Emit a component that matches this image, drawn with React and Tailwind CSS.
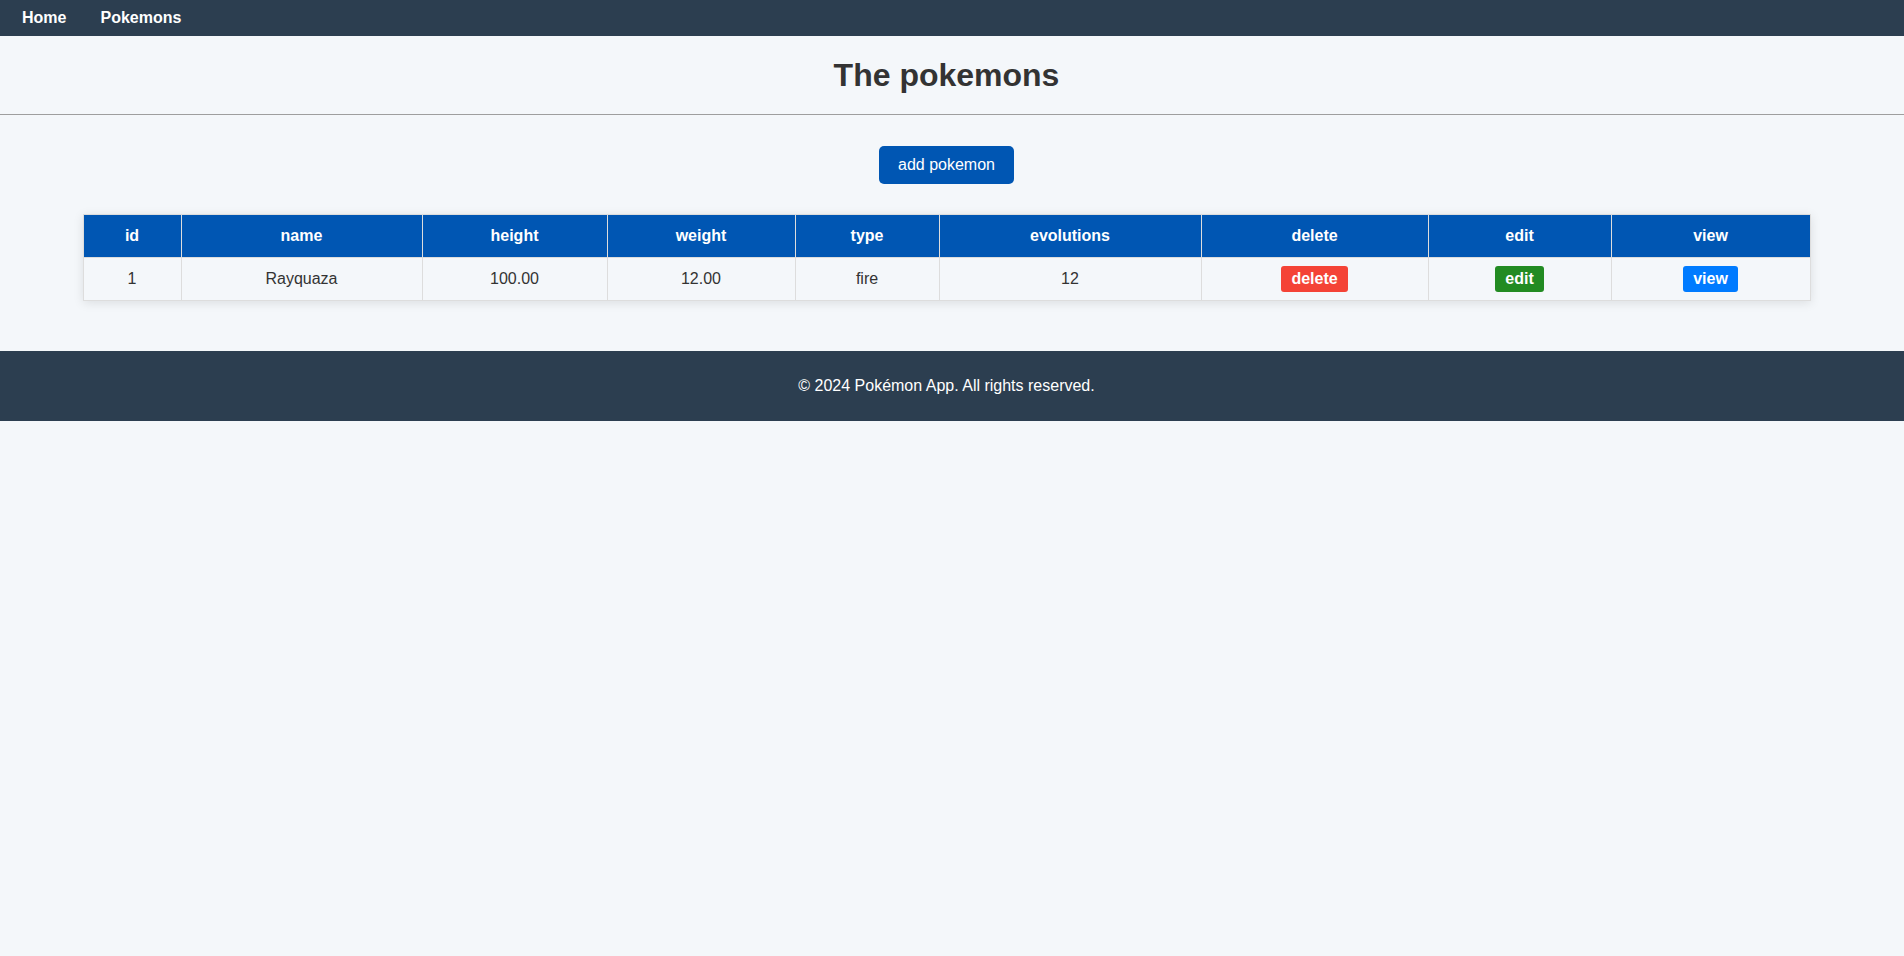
import React from 'react';

const columns = [
  { key: 'id', label: 'id', width: 'w-[98px]' },
  { key: 'name', label: 'name', width: 'w-[241px]' },
  { key: 'height', label: 'height', width: 'w-[185px]' },
  { key: 'weight', label: 'weight', width: 'w-[188px]' },
  { key: 'type', label: 'type', width: 'w-[144px]' },
  { key: 'evolutions', label: 'evolutions', width: 'w-[262px]' },
  { key: 'delete', label: 'delete', width: 'w-[227px]' },
  { key: 'edit', label: 'edit', width: 'w-[183px]' },
  { key: 'view', label: 'view', width: 'w-[199px]' },
];

const pokemons = [
  { id: 1, name: 'Rayquaza', height: '100.00', weight: '12.00', type: 'fire', evolutions: 12 },
];

function ActionButton({ color, children }) {
  return (
    <button className={`${color} text-white font-bold text-base leading-[18px] px-[10px] py-1 rounded-[3px]`}>
      {children}
    </button>
  );
}

function App() {
  return (
    <div className="min-h-screen bg-[#f4f7fa] text-[#333] font-['Liberation_Sans',Arial,sans-serif]">
      {/* Top navigation */}
      <nav className="h-9 bg-[#2c3e50] flex items-center pl-[22px] gap-[34px]">
        <a href="#" className="text-white font-bold text-base">Home</a>
        <a href="#" className="text-white font-bold text-base">Pokemons</a>
      </nav>

      <header className="pt-[21px] pb-[20px] pr-[11px] border-b border-[#9e9e9e] text-center">
        <h1 className="text-[32px] leading-[37px] font-bold text-[#333]">The pokemons</h1>
      </header>

      <main className="pr-[11px] pt-[31px] pb-[50px] flex flex-col items-center">
        <button className="bg-[#0056b3] text-white text-base leading-[18px] px-[19.5px] py-[10px] rounded-[5px]">
          add pokemon
        </button>

        <table className="mt-[30px] w-[1727px] table-fixed border-collapse border border-[#ddd] shadow-[0_2px_10px_rgba(0,0,0,0.1)]">
          <colgroup>
            {columns.map((c) => (
              <col key={c.key} className={c.width} />
            ))}
          </colgroup>
          <thead>
            <tr className="bg-[#0056b3]">
              {columns.map((c) => (
                <th key={c.key} className="border border-[#ddd] py-3 text-white font-bold text-base leading-[18px] text-center">
                  {c.label}
                </th>
              ))}
            </tr>
          </thead>
          <tbody>
            {pokemons.map((p) => (
              <tr key={p.id}>
                <td className="border border-[#ddd] py-2 text-center text-base">{p.id}</td>
                <td className="border border-[#ddd] py-2 text-center text-base">{p.name}</td>
                <td className="border border-[#ddd] py-2 text-center text-base">{p.height}</td>
                <td className="border border-[#ddd] py-2 text-center text-base">{p.weight}</td>
                <td className="border border-[#ddd] py-2 text-center text-base">{p.type}</td>
                <td className="border border-[#ddd] py-2 text-center text-base">{p.evolutions}</td>
                <td className="border border-[#ddd] py-2 text-center">
                  <ActionButton color="bg-[#f44336]">delete</ActionButton>
                </td>
                <td className="border border-[#ddd] py-2 text-center">
                  <ActionButton color="bg-[#228b22]">edit</ActionButton>
                </td>
                <td className="border border-[#ddd] py-2 text-center">
                  <ActionButton color="bg-[#007bff]">view</ActionButton>
                </td>
              </tr>
            ))}
          </tbody>
        </table>
      </main>

      <footer className="bg-[#2c3e50] py-[26px] pr-[11px] text-center">
        <p className="text-white text-base leading-[18px]">© 2024 Pokémon App. All rights reserved.</p>
      </footer>
    </div>
  );
}

export default App;
